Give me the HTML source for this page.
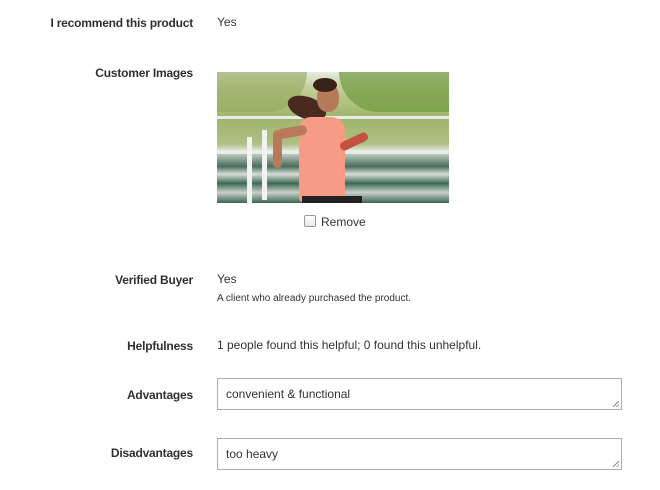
<!DOCTYPE html>
<html><head><style>
body{margin:0;width:660px;height:490px;background:#fff;font-family:"Liberation Sans",sans-serif;color:#303030;position:relative;overflow:hidden}
.l{position:absolute;right:467px;font-size:12px;font-weight:bold;color:#303030;white-space:nowrap;letter-spacing:-0.2px}
.v{position:absolute;left:217px;font-size:12px;color:#333;white-space:nowrap}
.ta{position:absolute;left:217px;width:403px;height:30px;border:1px solid #adadad;background:#fff}
.ta span{position:absolute;left:8px;top:8px;font-size:12px;color:#333}
.ta i{position:absolute;right:2px;bottom:2px;width:6px;height:6px;background:linear-gradient(135deg,transparent 45%,#888 45%,#888 55%,transparent 55%,transparent 75%,#888 75%,#888 85%,transparent 85%)}
</style></head><body>
<div class="l" style="top:16px">I recommend this product</div>
<div class="v" style="top:15px">Yes</div>
<div class="l" style="top:66px">Customer Images</div>
<div style="position:absolute;left:217px;top:72px;width:232px;height:131px;overflow:hidden;background:linear-gradient(180deg,#e6ebe4 0%,#c4cf98 12%,#9fb56a 35%,#b0bf84 55%,#dfe3dc 60%,#486e5a 72%,#d8ddd8 78%,#3f6a55 85%,#c9d1cb 92%,#3d6652 100%)">
 <div style="position:absolute;left:0;top:0;width:90px;height:40px;background:#8fa85a;opacity:.6;border-radius:0 0 40px 0"></div>
 <div style="position:absolute;right:0;top:0;width:110px;height:40px;background:#6e9a3e;opacity:.7;border-radius:0 0 0 50px"></div>
 <div style="position:absolute;left:0;top:44px;width:232px;height:3px;background:#e8ece6"></div>
 <div style="position:absolute;left:0;top:78px;width:232px;height:4px;background:#e8ece6"></div>
 <div style="position:absolute;left:30px;top:65px;width:5px;height:66px;background:#f2f2f2"></div>
 <div style="position:absolute;left:45px;top:58px;width:5px;height:70px;background:#f2f2f2"></div>
 <div style="position:absolute;left:70px;top:25px;width:40px;height:22px;background:#4a2a1e;border-radius:50%;transform:rotate(20deg)"></div>
 <div style="position:absolute;left:100px;top:12px;width:22px;height:28px;background:#b57a5a;border-radius:45%"></div>
 <div style="position:absolute;left:96px;top:6px;width:24px;height:14px;background:#3a2218;border-radius:50%"></div>
 <div style="position:absolute;left:82px;top:45px;width:46px;height:85px;background:#f79a86;border-radius:12px 14px 4px 4px"></div>
 <div style="position:absolute;left:60px;top:55px;width:30px;height:10px;background:#b87a5a;border-radius:5px;transform:rotate(-10deg)"></div>
 <div style="position:absolute;left:56px;top:58px;width:9px;height:38px;background:#b87a5a;border-radius:5px"></div>
 <div style="position:absolute;left:122px;top:65px;width:30px;height:9px;background:#c4523e;border-radius:5px;transform:rotate(-25deg)"></div>
 <div style="position:absolute;left:85px;top:124px;width:60px;height:10px;background:#222"></div>
</div>
<div style="position:absolute;left:304px;top:215px;width:10px;height:10px;border:1px solid #999;border-radius:2px;background:linear-gradient(#fff,#e8e8e8)"></div>
<div class="v" style="left:321px;top:215px">Remove</div>
<div class="l" style="top:273px">Verified Buyer</div>
<div class="v" style="top:272px">Yes</div>
<div class="v" style="top:293px;font-size:10px">A client who already purchased the product.</div>
<div class="l" style="top:339px">Helpfulness</div>
<div class="v" style="top:338px">1 people found this helpful; 0 found this unhelpful.</div>
<div class="l" style="top:388px">Advantages</div>
<div class="ta" style="top:378px"><span>convenient &amp; functional</span><i></i></div>
<div class="l" style="top:446px">Disadvantages</div>
<div class="ta" style="top:438px"><span>too heavy</span><i></i></div>
</body></html>
